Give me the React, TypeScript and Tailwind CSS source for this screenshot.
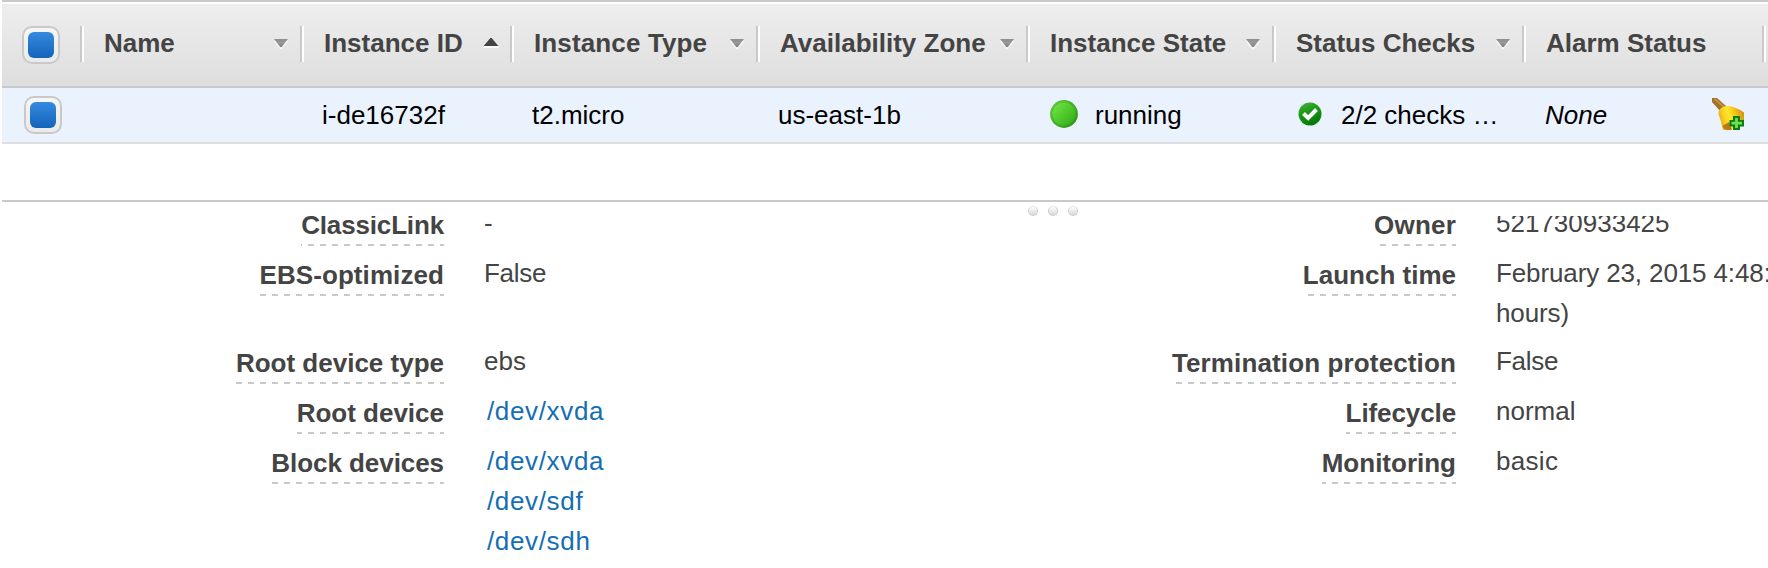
import React from "react";

type Sort = "down" | "up" | "none";

function SortArrow({ sort }: { sort: Sort }) {
  if (sort === "none") return null;
  return (
    <svg className="mt-[10px] h-5 w-5 shrink-0" viewBox="0 0 20 20" aria-hidden="true">
      <defs>
        <linearGradient id="arrowGrey" x1="0" y1="0" x2="0" y2="1">
          <stop offset="0" stopColor="#8f8f8f" />
          <stop offset="0.5" stopColor="#999" />
          <stop offset="1" stopColor="#7d7d7d" />
        </linearGradient>
      </defs>
      {sort === "down" ? (
        <>
          <path d="M2.5 5 L10 14 L17.5 5" fill="#f8f8f8" />
          <path d="M3 3 H17 L10.8 11 H9.2 Z" fill="url(#arrowGrey)" />
        </>
      ) : (
        <>
          <path d="M3 10 H17.5 V12 H3 Z" fill="#fafafa" />
          <path d="M2.6 10 L9.4 2 H10.6 L17.4 10 Z" fill="#444" />
        </>
      )}
    </svg>
  );
}

function Checkbox() {
  return (
    <span className="flex h-[38px] w-[38px] items-center justify-center rounded-[10px] border-2 border-[#c9c9c9] bg-linear-to-b from-[#f6f6f6] to-[#eaeaea]">
      <span className="h-[26px] w-[26px] rounded-[6px] bg-linear-to-b from-[#348ae0] to-[#1364b9]" />
    </span>
  );
}

function HeaderCell({ label, width, sort, spacing = "" }: { label: string; width: string; sort: Sort; spacing?: string }) {
  return (
    <div className={`flex h-9 shrink-0 border-l-2 border-[#c9c9c9] ${width}`}>
      <div className="flex min-w-0 flex-1 justify-between border-l-2 border-white pr-[9px] pl-5">
        <span className={`mt-[2px] text-[26px] leading-[30px] font-bold whitespace-nowrap text-[#444] ${spacing}`}>{label}</span>
        <SortArrow sort={sort} />
      </div>
    </div>
  );
}

function RunningIcon() {
  return (
    <svg className="mt-3 h-7 w-7 shrink-0" viewBox="0 0 28 28" aria-hidden="true">
      <defs>
        <linearGradient id="run" x1="0" y1="0" x2="1" y2="1">
          <stop offset="0" stopColor="#7ae34a" />
          <stop offset="0.5" stopColor="#4fca2c" />
          <stop offset="1" stopColor="#2fa41b" />
        </linearGradient>
        <linearGradient id="runRim" x1="0" y1="0" x2="1" y2="1">
          <stop offset="0" stopColor="#62cf3a" />
          <stop offset="1" stopColor="#258f12" />
        </linearGradient>
      </defs>
      <circle cx="14" cy="14" r="13.9" fill="url(#runRim)" />
      <circle cx="14" cy="14" r="11.6" fill="url(#run)" />
    </svg>
  );
}

function CheckIcon() {
  return (
    <svg className="mt-[13px] h-[26px] w-[26px] shrink-0" viewBox="0 0 26 26" aria-hidden="true">
      <defs>
        <linearGradient id="ok" x1="0" y1="0" x2="0.4" y2="1">
          <stop offset="0" stopColor="#4fae4c" />
          <stop offset="0.5" stopColor="#189a10" />
          <stop offset="1" stopColor="#07780a" />
        </linearGradient>
      </defs>
      <circle cx="13" cy="13" r="11.5" fill="url(#ok)" />
      <circle cx="13" cy="13" r="11.7" fill="none" stroke="#a9d3a9" strokeWidth="1" strokeDasharray="3 6.19" />
      <path d="M6.5 12.5 L11.2 17 L19.5 8.5" fill="none" stroke="#fff" strokeWidth="4" />
    </svg>
  );
}

function BellIcon() {
  return (
    <svg className="h-8 w-8 shrink-0" viewBox="0 0 32 32" aria-hidden="true">
      <defs>
        <linearGradient id="bell" x1="0" y1="0.65" x2="1" y2="0.35">
          <stop offset="0" stopColor="#dfa20c" />
          <stop offset="0.25" stopColor="#fbd020" />
          <stop offset="0.45" stopColor="#ffe62a" />
          <stop offset="0.7" stopColor="#f6c414" />
          <stop offset="1" stopColor="#d3930e" />
        </linearGradient>
      </defs>
      <path d="M0 0 H5 L14 8 L9 14 L0 4 Z" fill="#a37028" />
      <path d="M2.5 1 L12.5 9.5" stroke="#c48f45" strokeWidth="2" fill="none" />
      <path d="M6.5 16 Q6 9.500 14.500 8 Q22 7.500 32 14.500 L32 22 L19 32 H11 Q9.500 24 6.500 16 Z" fill="url(#bell)" />
      <path d="M10.500 28 Q12 32 16 32 H20 L17 24 Z" fill="#b9781a" />
      <path d="M21 18 H28 V22 H32 V28.500 H28 V32 H21 V28.500 H17.500 V22 H21 Z" fill="#0a7d0a" />
      <path d="M24.500 20 V30 M19.500 25.200 H30" stroke="#6ee052" strokeWidth="2.8" fill="none" />
    </svg>
  );
}

function Detail({ label, height = "h-[50px]", spacing = "", children }: { label: string; height?: string; spacing?: string; children: React.ReactNode }) {
  return (
    <div className={`flex gap-10 ${height}`}>
      <dt className="w-[442px] shrink-0 pt-[2px] text-right leading-10 font-bold">
        <span className={`bg-[repeating-linear-gradient(to_left,#c9c9c9_0px,#c9c9c9_4px,transparent_4px,transparent_10px,#c9c9c9_10px,#c9c9c9_12px)] bg-[length:100%_2px] bg-bottom bg-no-repeat pb-[6px] ${spacing}`}>{label}</span>
      </dt>
      <dd className="leading-10 whitespace-nowrap">{children}</dd>
    </div>
  );
}

function DeviceLink({ children }: { children: string }) {
  return <a href="#" className="ml-[3px] block tracking-[0.65px] text-[#146eb4]">{children}</a>;
}

function GripDot() {
  return <span className="h-[10px] w-[10px] rounded-full border-[1.5px] border-[#cdcdcd] border-t-[#e6e6e6] bg-linear-to-b from-white to-[#d8d8d8]" />;
}

export default function App() {
  return (
    <div className="flex h-[568px] w-[1768px] flex-col overflow-hidden bg-white pl-[2px] font-['Liberation_Sans',Arial,sans-serif] text-[26px] text-[#444]">
      <header className="flex h-[88px] shrink-0 overflow-hidden border-t-2 border-b-2 border-[#c9c9c9]">
        <div className="flex w-full border-t-2 border-white bg-linear-to-b from-[#eeeeee] to-[#dedede] pt-[22px]">
          <div className="w-[78px] shrink-0 pl-5"><Checkbox /></div>
          <HeaderCell label="Name" width="w-[220px]" sort="down" />
          <HeaderCell label="Instance ID" width="w-[210px]" sort="up" />
          <HeaderCell label="Instance Type" width="w-[246px]" sort="down" spacing="tracking-[0.13px]" />
          <HeaderCell label="Availability Zone" width="w-[270px]" sort="down" />
          <HeaderCell label="Instance State" width="w-[246px]" sort="down" />
          <HeaderCell label="Status Checks" width="w-[250px]" sort="down" />
          <HeaderCell label="Alarm Status" width="w-[240px]" sort="none" />
          <HeaderCell label="" width="w-[40px]" sort="none" />
        </div>
      </header>

      <div className="flex h-14 shrink-0 border-b-2 border-[#dedede] bg-[#eaf2fe] leading-[54px] whitespace-nowrap text-black">
        <div className="w-[320px] shrink-0 pt-2 pl-[22px]"><Checkbox /></div>
        <div className="w-[210px] shrink-0">i-de16732f</div>
        <div className="w-[246px] shrink-0">t2.micro</div>
        <div className="w-[270px] shrink-0">us-east-1b</div>
        <div className="flex w-[249px] shrink-0 gap-[17px] pl-[2px]"><RunningIcon />running</div>
        <div className="flex w-[248px] shrink-0 gap-[18px]"><CheckIcon />2/2 checks …</div>
        <div className="w-[167px] shrink-0 italic">None</div>
        <div className="pt-[10px]"><BellIcon /></div>
      </div>

      <div className="h-14 shrink-0" />

      <div className="flex h-4 shrink-0 gap-[10px] border-t-2 border-[#c9c9c9] pt-1 pl-[1026px]">
        <GripDot /><GripDot /><GripDot />
      </div>

      <section className="flex min-h-0 flex-1 overflow-hidden">
        <dl className="mt-[-13px] w-[1012px] shrink-0">
          <Detail label="ClassicLink" spacing="tracking-[-0.15px]">-</Detail>
          <Detail label="EBS-optimized" height="h-[88px]" spacing="tracking-[0.08px]"><span className="tracking-[-0.3px]">False</span></Detail>
          <Detail label="Root device type">ebs</Detail>
          <Detail label="Root device"><DeviceLink>/dev/xvda</DeviceLink></Detail>
          <Detail label="Block devices" height="h-[120px]" spacing="tracking-[-0.06px]">
            <DeviceLink>/dev/xvda</DeviceLink>
            <DeviceLink>/dev/sdf</DeviceLink>
            <DeviceLink>/dev/sdh</DeviceLink>
          </Detail>
        </dl>
        <dl className="mt-[-13px] shrink-0">
          <Detail label="Owner" spacing="tracking-[0.2px]">521730933425</Detail>
          <Detail label="Launch time" height="h-[88px]">
            <span className="tracking-[-0.12px]">February 23, 2015 4:48:<br />hours)</span>
          </Detail>
          <Detail label="Termination protection" spacing="tracking-[0.13px]"><span className="tracking-[-0.3px]">False</span></Detail>
          <Detail label="Lifecycle" spacing="tracking-[-0.1px]">normal</Detail>
          <Detail label="Monitoring"><span className="tracking-[0.3px]">basic</span></Detail>
        </dl>
      </section>
    </div>
  );
}
